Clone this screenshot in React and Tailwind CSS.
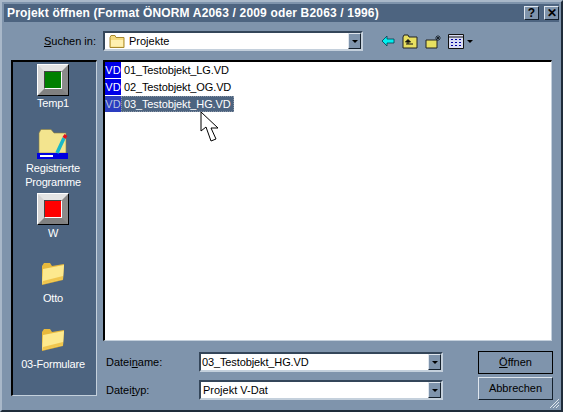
import React from "react";

const raised = "border border-t-[#dfe6ee] border-l-[#dfe6ee] border-r-[#14202c] border-b-[#14202c]";

function Under({ children }) {
  return <span className="underline underline-offset-1">{children}</span>;
}

function TitleButton({ children }) {
  return (
    <div className={`w-[15px] h-[14px] bg-[#7f94ac] flex items-center justify-center text-[12px] leading-none font-bold text-black ${raised}`}>
      {children}
    </div>
  );
}

function ArrowBox() {
  return (
    <div className={`w-[13px] h-[16px] shrink-0 bg-[#7f94ac] flex items-center justify-center ${raised}`}>
      <div className="w-0 h-0 border-x-[3px] border-x-transparent border-t-[3px] border-t-black" />
    </div>
  );
}

function Combo({ className, children }) {
  return (
    <div className={`h-[20px] bg-white border-2 border-t-[#34465a] border-l-[#34465a] border-r-[#c4d0dc] border-b-[#c4d0dc] flex items-center justify-between ${className}`}>
      <div className="flex items-center min-w-0 text-[11px] text-black">{children}</div>
      <ArrowBox />
    </div>
  );
}

function SmallFolder() {
  return (
    <svg width="16" height="13" viewBox="0 0 16 13">
      <path d="M1 2.5 L2 0.5 H6 L7 2.5 H15 V12.5 H1 Z" fill="#f6dc80" stroke="#a88a30" />
      <path d="M2 5 H14 V11.5 H2 Z" fill="#fff0b0" />
    </svg>
  );
}

function BigFolder() {
  return (
    <svg width="26" height="24" viewBox="0 0 26 24">
      <path d="M2 4 L4 1 H10 L12 4 L24 2 L23 18 L2 23 Z" fill="#e8b93c" />
      <path d="M3 7 L24 3 L23 17 L2 22 Z" fill="#fde98e" />
      <path d="M3 19 L23 14 L23 17 L2 22 Z" fill="#f0c64e" />
    </svg>
  );
}

function SquareIcon({ color }) {
  return (
    <div className="w-[32px] h-[32px] border border-t-white border-l-white border-r-black border-b-black">
      <div className="w-full h-full border-[6px] border-t-[#e4e4e4] border-l-[#d4d4d4] border-r-[#8a8a8a] border-b-[#808080] bg-[#808080]">
        <div className={`w-full h-full border border-t-[#444] border-l-[#444] border-r-white border-b-white ${color}`} />
      </div>
    </div>
  );
}

function RegIcon() {
  return (
    <svg width="32" height="30" viewBox="0 0 32 30">
      <path d="M2 4 L4 0.5 H14 L17 4 H29 V24 H2 Z" fill="#f3e48e" stroke="#8c8040" strokeWidth="0.6" />
      <path d="M0 24 H31 V30 H0 Z" fill="#0000e0" />
      <path d="M3 26 H16 V28 H3 Z" fill="#ffffff" />
      <path d="M20 24 L27 9" stroke="#18b8c8" strokeWidth="3.5" />
      <path d="M27 9 L29 6" stroke="#e01020" strokeWidth="3.5" />
    </svg>
  );
}

function SideItem({ icon, label, className, iconGap }) {
  return (
    <div className={`flex flex-col items-center text-white text-[11px] tracking-[-0.2px] leading-[14px] text-center ${className}`}>
      {icon}
      <div className={iconGap}>{label}</div>
    </div>
  );
}

function FileRow({ name, selected }) {
  return (
    <div className="flex items-center h-[16px]">
      <div className={`w-[16px] h-[16px] text-[11px] leading-[16px] text-center ${selected ? "bg-[#2a3cc0] text-[#b8c4dc]" : "bg-[#0000e8] text-white"}`}>VD</div>
      <div className={`pl-[3px] pr-[3px] h-[16px] text-[11px] leading-[16px] tracking-[-0.12px] ${selected ? "bg-[#4d6480] text-white outline-1 -outline-offset-1 outline-dotted outline-[#8a96a6]" : "text-black"}`}>{name}</div>
    </div>
  );
}

function DialogButton({ children, isDefault }) {
  return (
    <div className={`w-[75px] h-[23px] flex items-center justify-center text-[11px] text-black bg-[#7f94ac] ${isDefault ? "outline outline-1 -outline-offset-1 outline-black" : ""} ${raised}`}>
      {children}
    </div>
  );
}

export default function App() {
  return (
    <div className="relative w-[563px] h-[412px] overflow-hidden bg-[#7f94ac] border-2 border-t-[#a9b8c9] border-l-[#a9b8c9] border-r-[#1f2c3a] border-b-[#1f2c3a] p-[2px] font-['Liberation_Sans',sans-serif]">
      <div className="h-[18px] bg-[#4d6480] flex items-center justify-between pl-[3px] pr-[0px]">
        <span className="text-white text-[12px] font-bold tracking-[0.17px] whitespace-nowrap">Projekt öffnen (Format ÖNORM A2063 / 2009 oder B2063 / 1996)</span>
        <div className="flex gap-[5px]">
          <TitleButton>?</TitleButton>
          <TitleButton>✕</TitleButton>
        </div>
      </div>

      <div className="flex items-center h-[24px] mt-[7px]">
        <div className="w-[92px] text-right text-[11px] text-black"><Under>S</Under>uchen in:</div>
        <Combo className="w-[260px] ml-[7px]">
          <div className="ml-[4px] mr-[4px] flex"><SmallFolder /></div>
          Projekte
        </Combo>
        <div className="flex items-center ml-[18px] gap-[7px]">
          <svg width="14" height="12" viewBox="0 0 14 12">
            <path d="M1 6 L6 1 V4 H13 V8 H6 V11 Z" fill="#00f0f0" stroke="#004050" strokeWidth="0.8" />
          </svg>
          <svg width="16" height="15" viewBox="0 0 16 15">
            <path d="M1 3 L2 1 H6 L7 3 H15 V14 H1 Z" fill="#e8e060" stroke="#222" />
            <path d="M4 10 H11 M6 8 V10 M6 5.5 L3.5 8 L8.5 8 Z" stroke="#111" strokeWidth="1" fill="#111" />
          </svg>
          <svg width="17" height="15" viewBox="0 0 17 15">
            <path d="M1 6 H12 V14 H1 Z" fill="#e8e060" stroke="#222" />
            <path d="M13 1 V7 M10 4 H16 M11 2 L15 6 M15 2 L11 6" stroke="#101820" strokeWidth="0.8" />
          </svg>
          <div className="flex items-center gap-[3px] -ml-[1px]">
            <svg width="16" height="15" viewBox="0 0 16 15">
              <path d="M0.5 0.5 H15.5 V14.5 H0.5 Z" fill="#d8dcf4" stroke="#111" />
              <path d="M1 3 H15" stroke="#111" />
              <path d="M3 5 H5 V6 H3 Z M7 5 H9 V6 H7 Z M11 5 H13 V6 H11 Z M3 8 H5 V9 H3 Z M7 8 H9 V9 H7 Z M11 8 H13 V9 H11 Z M3 11 H5 V12 H3 Z M7 11 H9 V12 H7 Z M11 11 H13 V12 H11 Z" fill="#0000a0" />
            </svg>
            <div className="w-0 h-0 border-x-[3px] border-x-transparent border-t-[3px] border-t-black" />
          </div>
        </div>
      </div>

      <div className="flex mt-[7px]">
        <div className="w-[86px] h-[336px] ml-[7px] bg-[#4d6480] border-t-2 border-l-2 border-r border-b border-t-black border-l-black border-r-[#c4d0dc] border-b-[#c4d0dc] flex flex-col items-center pt-[2px] pr-[3px]">
          <SideItem icon={<SquareIcon color="bg-[#008000]" />} label="Temp1" />
          <SideItem className="mt-[19px]" iconGap="mt-[2px]" icon={<RegIcon />} label={<span>Registrierte<br />Programme</span>} />
          <SideItem className="mt-[4px]" iconGap="mt-[1px]" icon={<SquareIcon color="bg-[#ff0000]" />} label="W" />
          <SideItem className="mt-[22px]" iconGap="mt-[5px]" icon={<BigFolder />} label="Otto" />
          <SideItem className="mt-[23px]" iconGap="mt-[5px]" icon={<BigFolder />} label="03-Formulare" />
        </div>

        <div className="ml-[6px] w-[450px]">
          <div className="relative w-[449px] h-[281px] bg-white border-t-2 border-l-2 border-t-black border-l-black border-r border-b border-r-[#c4d0dc] border-b-[#c4d0dc] flex flex-col gap-[1px]">
            <FileRow name="01_Testobjekt_LG.VD" />
            <FileRow name="02_Testobjekt_OG.VD" />
            <FileRow name="03_Testobjekt_HG.VD" selected />
            <svg className="absolute left-[95px] top-[49px]" width="20" height="32" viewBox="0 0 20 32">
              <path d="M1 1 V20 L6 16 L11 30 L16 28 L11 17 L18 17 Z" fill="#fff" stroke="#000" />
            </svg>
          </div>

          <div className="flex justify-between mt-[10px]">
            <div className="flex flex-col gap-[8px] pt-[1px]">
              <div className="flex items-center">
                <div className="w-[96px] pl-[3px] text-[11px] text-black">Datei<Under>n</Under>ame:</div>
                <Combo className="w-[244px]"><span className="ml-[1px] tracking-[-0.12px]">03_Testobjekt_HG.VD</span></Combo>
              </div>
              <div className="flex items-center">
                <div className="w-[96px] pl-[3px] text-[11px] text-black">Datei<Under>t</Under>yp:</div>
                <Combo className="w-[244px]"><span className="ml-[2px]">Projekt V-Dat</span></Combo>
              </div>
            </div>
            <div className="flex flex-col gap-[3px]">
              <DialogButton isDefault><span><Under>Ö</Under>ffnen</span></DialogButton>
              <DialogButton>Abbrechen</DialogButton>
            </div>
          </div>
        </div>
      </div>

      <svg className="absolute right-[1px] bottom-[1px]" width="11" height="11" viewBox="0 0 11 11">
        <path d="M1 10 L10 1 M4 10 L10 4 M7 10 L10 7" stroke="#dfe6ee" strokeWidth="1" />
      </svg>
    </div>
  );
}
